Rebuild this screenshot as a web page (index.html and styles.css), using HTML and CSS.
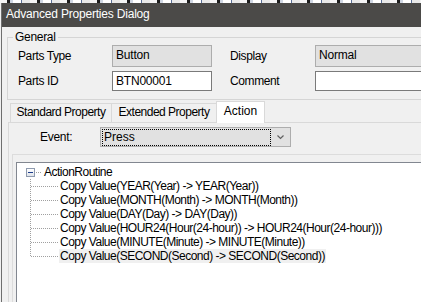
FILE: index.html
```html
<!DOCTYPE html>
<html lang="en">
<head>
    <meta charset="UTF-8">
    <title>Advanced Properties Dialog</title>
    <link rel="stylesheet" href="styles.css">
</head>
<body>
    <div class="noise"></div>
    <div class="window">
        <div class="titlebar">Advanced Properties Dialog</div>
        <div class="client">
            <fieldset class="group">
                <legend>General</legend>
                <div class="fields">
                    <span class="label">Parts Type</span>
                    <div class="box readonly">Button</div>
                    <span class="label label-right">Display</span>
                    <div class="box readonly">Normal</div>
                    <span class="label">Parts ID</span>
                    <div class="box">BTN00001</div>
                    <span class="label label-right">Comment</span>
                    <div class="box"></div>
                </div>
            </fieldset>

            <div class="tabs">
                <div class="tab tab-standard">Standard Property</div>
                <div class="tab tab-extended">Extended Property</div>
                <div class="tab tab-action active">Action</div>
            </div>

            <div class="panel">
                <div class="event-row">
                    <span class="event-label">Event:</span>
                    <div class="combo">
                        <span class="combo-value">Press</span>
                        <span class="combo-arrow">
                            <svg width="9" height="6" viewBox="0 0 9 6"><polyline points="1.5,1.5 4.5,4.5 7.5,1.5" fill="none" stroke="#606060" stroke-width="1.2"/></svg>
                        </span>
                    </div>
                </div>

                <div class="inner">
                    <div class="tree">
                        <div class="node root">
                            <span class="expander"><span class="minus"></span></span>
                            <span class="stub"></span>
                            <span class="text">ActionRoutine</span>
                        </div>
                        <div class="children">
                            <div class="node"><span class="conn"></span><span class="text">Copy Value(YEAR(Year) -&gt; YEAR(Year))</span></div>
                            <div class="node"><span class="conn"></span><span class="text">Copy Value(MONTH(Month) -&gt; MONTH(Month))</span></div>
                            <div class="node"><span class="conn"></span><span class="text">Copy Value(DAY(Day) -&gt; DAY(Day))</span></div>
                            <div class="node"><span class="conn"></span><span class="text">Copy Value(HOUR24(Hour(24-hour)) -&gt; HOUR24(Hour(24-hour)))</span></div>
                            <div class="node"><span class="conn"></span><span class="text">Copy Value(MINUTE(Minute) -&gt; MINUTE(Minute))</span></div>
                            <div class="node"><span class="conn last"></span><span class="text selected">Copy Value(SECOND(Second) -&gt; SECOND(Second))</span></div>
                        </div>
                    </div>
                </div>
            </div>
        </div>
    </div>
</body>
</html>
```

FILE: styles.css
```css
html, body {
    margin: 0;
    padding: 0;
    width: 421px;
    height: 302px;
    overflow: hidden;
}

body {
    font-family: "Liberation Sans", Arial, sans-serif;
    font-size: 12px;
    color: #000;
    background: linear-gradient(to right, #f0f0f0 1px, #6e6e6e 1px, #6e6e6e 2px, #f0f0f0 2px);
}

/* strip of the window behind */
.noise {
    height: 3px;
    background: repeating-linear-gradient(90deg, #f4f4f4 0 7px, #1e1e1e 7px 10px, #cfd6e2 10px 13px, #ffffff 13px 21px, #5a6f96 21px 22px, #e8e8e8 22px 30px);
}

.window {
    margin-left: 2px;
}

.titlebar {
    height: 24px;
    line-height: 23px;
    padding-left: 4px;
    background-color: #4b4a48;
    color: #ffffff;
    font-size: 12px;
    letter-spacing: -0.2px;
}

.client {
    background-color: #f0f0f0;
    height: 280px;
    overflow: hidden;
}

/* General group */
.group {
    margin: 3px 0 0 5px;
    padding: 0 0 8px 5px;
    border: 1px solid #d5d5d5;
    width: 480px;
    box-sizing: border-box;
}

.group legend {
    padding: 0 2px;
    line-height: 14px;
    letter-spacing: -0.3px;
}

.fields {
    display: grid;
    grid-template-columns: 94px 100px 103px 200px;
    grid-template-rows: 22px 20px;
    row-gap: 4px;
    margin: 1px 0 0 5px;
}

.label {
    display: flex;
    align-items: center;
    letter-spacing: -0.4px;
}

.label-right {
    padding-left: 18px;
}

.box {
    border: 1px solid #7a7a7a;
    background-color: #ffffff;
    padding-left: 3px;
    line-height: 18px;
    letter-spacing: -0.2px;
}

.box.readonly {
    border-color: #adadad;
    background-color: #e1e1e1;
    line-height: 19px;
}

/* Tabs */
.tabs {
    display: flex;
    align-items: flex-end;
    height: 21px;
    margin: 1px 0 0 8px;
}

.tab {
    box-sizing: border-box;
    height: 19px;
    border: 1px solid #d9d9d9;
    border-bottom: none;
    background-color: #f0f0f0;
    text-align: center;
    line-height: 17px;
    letter-spacing: -0.5px;
}

.tab-standard {
    width: 102px;
}

.tab-extended {
    width: 105px;
    border-left: none;
}

.tab-action {
    width: 49px;
    margin-left: -1px;
}

.tab.active {
    position: relative;
    z-index: 1;
    height: 22px;
    margin-bottom: -1px;
    background-color: #ffffff;
    line-height: 18px;
    letter-spacing: 0;
}

.panel {
    margin-left: 6px;
    width: 480px;
    height: 200px;
    border: 1px solid #d9d9d9;
    background-color: #f0f0f0;
    padding: 4px 0 0 0;
}

.event-row {
    display: flex;
    align-items: center;
    padding-left: 31px;
}

.event-label {
    width: 60px;
    letter-spacing: -0.3px;
}

.combo {
    display: flex;
    box-sizing: border-box;
    width: 191px;
    height: 20px;
    border: 1px solid #adadad;
    background-color: #e1e1e1;
}

.combo-value {
    box-sizing: border-box;
    width: 169px;
    height: 17px;
    margin: 1px 0 0 1px;
    padding-left: 1px;
    border: 1px dotted #000;
    line-height: 15px;
}

.combo-arrow {
    flex: 1;
    display: flex;
    align-items: center;
    justify-content: center;
}

.inner {
    margin: 7px 0 0 3px;
    border: 1px solid #dcdcdc;
    padding: 7px 0 0 3px;
    height: 200px;
}

/* Tree view */
.tree {
    height: 200px;
    border: 1px solid #828790;
    background-color: #ffffff;
    padding: 2px 0 0 9px;
    font-size: 12px;
    letter-spacing: -0.5px;
}

.node {
    display: flex;
    align-items: center;
    height: 14px;
    white-space: nowrap;
}

.expander {
    box-sizing: border-box;
    width: 9px;
    height: 9px;
    border: 1px solid #8e9aae;
    background: linear-gradient(#ffffff, #dfe3ea);
    display: flex;
    align-items: center;
    justify-content: center;
}

.minus {
    width: 5px;
    height: 1px;
    background-color: #1c3c8c;
}

.stub {
    width: 6px;
    height: 1px;
    margin: 0 2px 0 1px;
    background: repeating-linear-gradient(90deg, #a0a0a0 0 1px, transparent 1px 2px);
}

.children {
    margin-left: 4px;
}

.conn {
    width: 28px;
    height: 14px;
    background:
        repeating-linear-gradient(90deg, #a0a0a0 0 1px, transparent 1px 2px) 1px 7px / 27px 1px no-repeat,
        repeating-linear-gradient(180deg, #a0a0a0 0 1px, transparent 1px 2px) 0 0 / 1px 14px no-repeat;
}

.conn.last {
    background:
        repeating-linear-gradient(90deg, #a0a0a0 0 1px, transparent 1px 2px) 1px 7px / 27px 1px no-repeat,
        repeating-linear-gradient(180deg, #a0a0a0 0 1px, transparent 1px 2px) 0 0 / 1px 8px no-repeat;
}

.children .text {
    margin-left: 1px;
    padding: 0 1px;
    line-height: 14px;
}

.text.selected {
    background-color: #f0f0f0;
}
```
